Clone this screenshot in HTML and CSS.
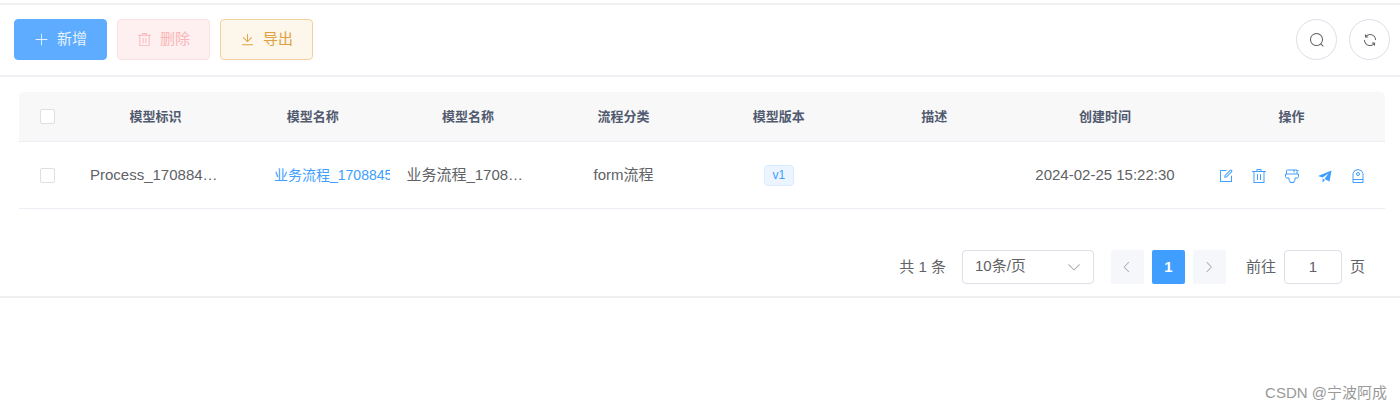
FILE: index.html
```html
<!DOCTYPE html>
<html lang="zh-CN">
  <head>
    <meta charset="UTF-8" />
    <meta name="viewport" content="width=device-width, initial-scale=1.0" />
    <title>流程模型</title>
    <link rel="stylesheet" href="styles.css" />
  </head>
  <body>
    <main class="card">
      <div class="toolbar">
        <button type="button" class="btn btn-primary">
          <svg class="icon" viewBox="0 0 1024 1024"><path d="M480 480V128a32 32 0 0 1 64 0v352h352a32 32 0 1 1 0 64H544v352a32 32 0 1 1-64 0V544H128a32 32 0 0 1 0-64z" /></svg>
          <span>新增</span>
        </button>
        <button type="button" class="btn btn-danger" disabled>
          <svg class="icon" viewBox="0 0 1024 1024"><path d="M160 256H96a32 32 0 0 1 0-64h256V95.936a32 32 0 0 1 32-32h256a32 32 0 0 1 32 32V192h256a32 32 0 1 1 0 64h-64v672a32 32 0 0 1-32 32H192a32 32 0 0 1-32-32zm448-64v-64H416v64zM224 896h576V256H224zm192-128a32 32 0 0 1-32-32V416a32 32 0 0 1 64 0v320a32 32 0 0 1-32 32m192 0a32 32 0 0 1-32-32V416a32 32 0 0 1 64 0v320a32 32 0 0 1-32 32" /></svg>
          <span>删除</span>
        </button>
        <button type="button" class="btn btn-warning">
          <svg class="icon" viewBox="0 0 1024 1024"><path d="M160 832h704a32 32 0 1 1 0 64H160a32 32 0 1 1 0-64m384-253.696 236.288-236.352 45.248 45.248L508.8 704 192 387.2l45.248-45.248L480 584.704V128h64z" /></svg>
          <span>导出</span>
        </button>
        <div class="toolbar-right">
          <button type="button" class="btn-circle" aria-label="搜索">
            <svg class="icon" viewBox="0 0 1024 1024"><path d="m795.904 750.72 124.992 124.928a32 32 0 0 1-45.248 45.248L750.656 795.904a416 416 0 1 1 45.248-45.248zM480 832a352 352 0 1 0 0-704 352 352 0 0 0 0 704" /></svg>
          </button>
          <button type="button" class="btn-circle" aria-label="刷新">
            <svg class="icon" viewBox="0 0 1024 1024"><path d="M771.776 794.88A384 384 0 0 1 128 512h64a320 320 0 0 0 555.712 216.448H654.72a32 32 0 1 1 0-64h149.056a32 32 0 0 1 32 32v148.928a32 32 0 1 1-64 0v-50.56zM276.288 295.616h92.992a32 32 0 0 1 0 64H220.16a32 32 0 0 1-32-32V178.56a32 32 0 0 1 64 0v50.56A384 384 0 0 1 896.128 512h-64a320 320 0 0 0-555.776-216.384z" /></svg>
          </button>
        </div>
      </div>

      <div class="content">
        <table class="table">
          <colgroup>
            <col class="col-check" />
            <col class="col-key" />
            <col />
            <col />
            <col />
            <col />
            <col />
            <col class="col-time" />
            <col class="col-actions" />
          </colgroup>
          <thead>
            <tr>
              <th><input type="checkbox" class="checkbox" aria-label="全选" /></th>
              <th>模型标识</th>
              <th>模型名称</th>
              <th>模型名称</th>
              <th>流程分类</th>
              <th>模型版本</th>
              <th>描述</th>
              <th>创建时间</th>
              <th>操作</th>
            </tr>
          </thead>
          <tbody>
            <tr>
              <td><input type="checkbox" class="checkbox" aria-label="选择此行" /></td>
              <td><div class="cell cell-key">Process_1708845750</div></td>
              <td class="cell-link"><a href="#" class="link">业务流程_1708845</a></td>
              <td><div class="cell">业务流程_1708845750</div></td>
              <td>form流程</td>
              <td><span class="tag">v1</span></td>
              <td></td>
              <td>2024-02-25 15:22:30</td>
              <td>
                <div class="actions">
                  <button type="button" class="btn-icon" aria-label="编辑">
                    <svg class="icon" viewBox="0 0 1024 1024"><path d="M832 512a32 32 0 1 1 64 0v352a32 32 0 0 1-32 32H160a32 32 0 0 1-32-32V160a32 32 0 0 1 32-32h352a32 32 0 0 1 0 64H192v640h640z" /><path d="m469.952 554.24 52.8-7.552L847.104 222.4a32 32 0 1 0-45.248-45.248L477.44 501.44l-7.552 52.8zm422.4-422.4a96 96 0 0 1 0 135.808l-331.84 331.84a32 32 0 0 1-18.112 9.088L436.8 623.68a32 32 0 0 1-36.224-36.224l15.104-105.6a32 32 0 0 1 9.024-18.112l331.904-331.84a96 96 0 0 1 135.744 0z" /></svg>
                  </button>
                  <button type="button" class="btn-icon" aria-label="删除">
                    <svg class="icon" viewBox="0 0 1024 1024"><path d="M160 256H96a32 32 0 0 1 0-64h256V95.936a32 32 0 0 1 32-32h256a32 32 0 0 1 32 32V192h256a32 32 0 1 1 0 64h-64v672a32 32 0 0 1-32 32H192a32 32 0 0 1-32-32zm448-64v-64H416v64zM224 896h576V256H224zm192-128a32 32 0 0 1-32-32V416a32 32 0 0 1 64 0v320a32 32 0 0 1-32 32m192 0a32 32 0 0 1-32-32V416a32 32 0 0 1 64 0v320a32 32 0 0 1-32 32" /></svg>
                  </button>
                  <button type="button" class="btn-icon" aria-label="设计">
                    <svg class="icon icon-line" viewBox="0 0 16 16"><path d="M2.500 6V3q0-1 1-1h9.500v4M10 2v2.500M13 2.500h1.500M1.500 6h13v2.500q0 1.500-1.500 1.500h-2v2q0 1-1 1v1.500H6V13q-1 0-1-1v-2H3q-1.500 0-1.500-1.500z" /></svg>
                  </button>
                  <button type="button" class="btn-icon" aria-label="发布">
                    <svg class="icon" viewBox="0 0 16 16"><path d="M1 8 14.500 2.500 12.500 13.500 7.500 11 11.500 5.500 5.500 9.500zM5.500 10.500 8 12 5.500 14.500z" /></svg>
                  </button>
                  <button type="button" class="btn-icon" aria-label="标签">
                    <svg class="icon icon-line" viewBox="0 0 16 16"><path d="M3 14.500V5.500Q3.500 2 8 1.500q4.500.5 5 4v9zM3 11.500h10" /><circle cx="8" cy="6" r="1.500" /></svg>
                  </button>
                </div>
              </td>
            </tr>
          </tbody>
        </table>

        <div class="pagination">
          <span class="total">共 1 条</span>
          <div class="select">
            <select aria-label="每页条数">
              <option>10条/页</option>
              <option>20条/页</option>
              <option>50条/页</option>
            </select>
            <svg class="icon select-arrow" viewBox="0 0 1024 1024"><path d="M831.872 340.864 512 652.672 192.128 340.864a30.592 30.592 0 0 0-42.752 0 29.120 29.120 0 0 0 0 41.600L489.664 714.240a32 32 0 0 0 44.672 0l340.288-331.712a29.120 29.120 0 0 0 0-41.728 30.592 30.592 0 0 0-42.752 0z" /></svg>
          </div>
          <div class="pager">
            <button type="button" class="page" disabled aria-label="上一页">
              <svg class="icon" viewBox="0 0 1024 1024"><path d="M609.408 149.376 277.760 489.600a32 32 0 0 0 0 44.672l331.648 340.352a29.120 29.120 0 0 0 41.728 0 30.592 30.592 0 0 0 0-42.752L339.264 511.936l311.872-319.872a30.592 30.592 0 0 0 0-42.688 29.120 29.120 0 0 0-41.728 0z" /></svg>
            </button>
            <button type="button" class="page page-active">1</button>
            <button type="button" class="page" disabled aria-label="下一页">
              <svg class="icon" viewBox="0 0 1024 1024"><path d="M340.864 149.312a30.592 30.592 0 0 0 0 42.752L652.736 512 340.864 831.872a30.592 30.592 0 0 0 0 42.752 29.120 29.120 0 0 0 41.728 0L714.240 534.336a32 32 0 0 0 0-44.672L382.592 149.376a29.120 29.120 0 0 0-41.728 0z" /></svg>
            </button>
          </div>
          <label class="jump">前往 <input type="text" value="1" /> 页</label>
        </div>
      </div>
    </main>

    <footer class="watermark">CSDN @宁波阿成</footer>
  </body>
</html>
```

FILE: styles.css
```css
* {
  box-sizing: border-box;
}

body {
  margin: 0;
  padding-top: 3px;
  min-height: 100vh;
  display: flex;
  flex-direction: column;
  font-family: "Liberation Sans", "Noto Sans CJK SC", sans-serif;
  font-size: 15px;
  line-height: 20px;
  color: #606266;
  background-color: #fff;
}

button,
input,
select {
  font: inherit;
  color: inherit;
}

button {
  padding: 0;
  border: 0;
  background: none;
  cursor: pointer;
}

.icon {
  display: block;
  width: 16px;
  height: 16px;
  fill: currentColor;
}

.icon-line {
  fill: none;
  stroke: currentColor;
}

.card {
  border-top: 2px solid #f0f1f3;
  border-bottom: 2px solid #eef0f2;
}

/* 工具栏 */
.toolbar {
  display: flex;
  align-items: center;
  gap: 10px;
  padding: 14px 10px 15px 14px;
  border-bottom: 2px solid #f0f1f4;
}

.btn {
  display: flex;
  align-items: center;
  justify-content: center;
  gap: 8px;
  width: 93px;
  height: 41px;
  border: 1px solid;
  border-radius: 4px;
}

.btn .icon {
  width: 15px;
  height: 15px;
}

.btn span {
  margin-bottom: 2px;
}

.btn-primary {
  color: #e4f1ff;
  background-color: #5eacff;
  border-color: #5eacff;
}

.btn-danger {
  color: #fab6b6;
  background-color: #feeff0;
  border-color: #fde2e4;
}

.btn-warning {
  color: #e0a040;
  background-color: #fdf6ea;
  border-color: #f3d19e;
}

.toolbar-right {
  display: flex;
  gap: 12px;
  margin-left: auto;
}

.btn-circle {
  display: flex;
  align-items: center;
  justify-content: center;
  width: 41px;
  height: 41px;
  border: 1px solid #dcdfe6;
  border-radius: 50%;
}

/* 表格 */
.content {
  padding: 15px 15px 12px 19px;
}

.table {
  width: 100%;
  table-layout: fixed;
  border-collapse: separate;
  border-spacing: 0;
  text-align: center;
}

.col-check {
  width: 57px;
}

.col-key {
  width: 159px;
}

.col-time {
  width: 186px;
}

.col-actions {
  width: 187px;
}

th,
td {
  padding: 0;
  border-bottom: 1px solid #ebeef5;
  white-space: nowrap;
  overflow: hidden;
}

th {
  height: 50px;
  font-size: 13px;
  font-weight: bold;
  color: #515a6e;
  background-color: #f8f8f9;
}

th:first-child {
  border-top-left-radius: 5px;
}

th:last-child {
  border-top-right-radius: 5px;
}

td {
  height: 67px;
}

.cell {
  padding: 0 16px;
  overflow: hidden;
  text-overflow: ellipsis;
}

.cell-key {
  padding: 0 14px;
}

.cell-link {
  padding-left: 39px;
  text-align: left;
}

.link {
  font-size: 14px;
  color: #409eff;
  text-decoration: none;
}

.checkbox {
  appearance: none;
  display: block;
  width: 15px;
  height: 15px;
  margin: 0 auto;
  border: 1px solid #dcdfe6;
  border-radius: 2px;
  background-color: #fff;
}

.tag {
  display: inline-block;
  padding: 0 8px;
  border: 1px solid #d9ecff;
  border-radius: 4px;
  font-size: 12px;
  line-height: 19px;
  color: #409eff;
  background-color: #ecf5ff;
}

.actions {
  display: flex;
  justify-content: center;
  gap: 17px;
  padding-top: 2px;
}

.btn-icon {
  color: #409eff;
}

/* 分页 */
.pagination {
  display: flex;
  align-items: center;
  justify-content: flex-end;
  margin-top: 41px;
  padding-right: 20px;
}

.select {
  position: relative;
  width: 132px;
  margin: 0 17px 0 16px;
}

.select select {
  appearance: none;
  display: block;
  width: 100%;
  height: 34px;
  padding: 0 12px 2px;
  border: 1px solid #dcdfe6;
  border-radius: 4px;
  background-color: #fff;
}

.select-arrow {
  position: absolute;
  top: 9px;
  right: 12px;
  color: #a8abb2;
  pointer-events: none;
}

.pager {
  display: flex;
  gap: 8px;
}

.page {
  display: flex;
  align-items: center;
  justify-content: center;
  width: 33px;
  height: 34px;
  border-radius: 2px;
  color: #a8abb2;
  background-color: #f5f7fa;
}

.page .icon {
  width: 14px;
  height: 14px;
}

.page-active {
  font-weight: bold;
  color: #fff;
  background-color: #409eff;
}

.jump {
  display: flex;
  align-items: center;
  gap: 8px;
  margin-left: 20px;
}

.jump input {
  width: 58px;
  height: 34px;
  padding: 0 0 2px;
  border: 1px solid #dcdfe6;
  border-radius: 4px;
  text-align: center;
}

.watermark {
  margin-top: auto;
  padding: 0 13px 6px 0;
  text-align: right;
  color: #999;
}
```
